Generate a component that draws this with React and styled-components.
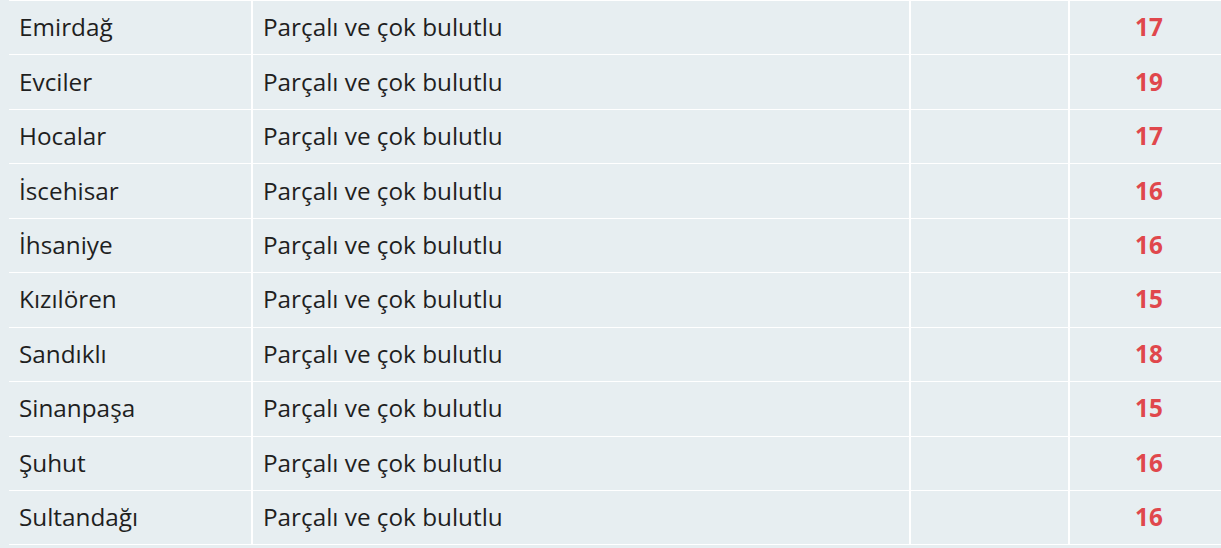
import React from "react";
import styled, { createGlobalStyle } from "styled-components";

const COLORS = {
  page: "#e7eef1",
  line: "#ffffff",
  text: "#1f1f1f",
  hot: "#e0474c",
};

const GlobalStyle = createGlobalStyle`
  html, body {
    margin: 0;
    padding: 0;
    background: ${COLORS.page};
    overflow: hidden;
  }
  body {
    font-family: "Open Sans", "Noto Sans", sans-serif;
  }
`;

const Wrapper = styled.div`
  padding-left: 9px;
  width: 1219px;
`;

const Table = styled.table`
  width: 1219px;
  border-collapse: collapse;
  table-layout: fixed;
  border-top: 1px solid ${COLORS.line};
`;

const Col = styled.col`
  width: ${(p) => p.$width}px;
`;

const Row = styled.tr`
  height: 54.45px;
  border-bottom: 1px solid ${COLORS.line};
`;

const Cell = styled.td`
  padding: 0 10px 2px;
  font-size: 24.3px;
  color: ${COLORS.text};
  white-space: nowrap;
  vertical-align: middle;
  & + & {
    border-left: 2px solid ${COLORS.line};
  }
`;

const Temp = styled(Cell)`
  text-align: center;
  font-weight: 700;
  color: ${COLORS.hot};
`;

const COLUMNS = [243, 658, 159, 159];

const rows = [
  ["Emirdağ", 17],
  ["Evciler", 19],
  ["Hocalar", 17],
  ["İscehisar", 16],
  ["İhsaniye", 16],
  ["Kızılören", 15],
  ["Sandıklı", 18],
  ["Sinanpaşa", 15],
  ["Şuhut", 16],
  ["Sultandağı", 16],
];

const App = () => {
  return (
    <Wrapper>
      <GlobalStyle />
      <Table>
        <colgroup>
          {COLUMNS.map((w, i) => (
            <Col key={i} $width={w} />
          ))}
        </colgroup>
        <tbody>
          {rows.map(([name, temp]) => (
            <Row key={name}>
              <Cell>{name}</Cell>
              <Cell>Parçalı ve çok bulutlu</Cell>
              <Cell />
              <Temp>{temp}</Temp>
            </Row>
          ))}
        </tbody>
      </Table>
    </Wrapper>
  );
};

export default App;
